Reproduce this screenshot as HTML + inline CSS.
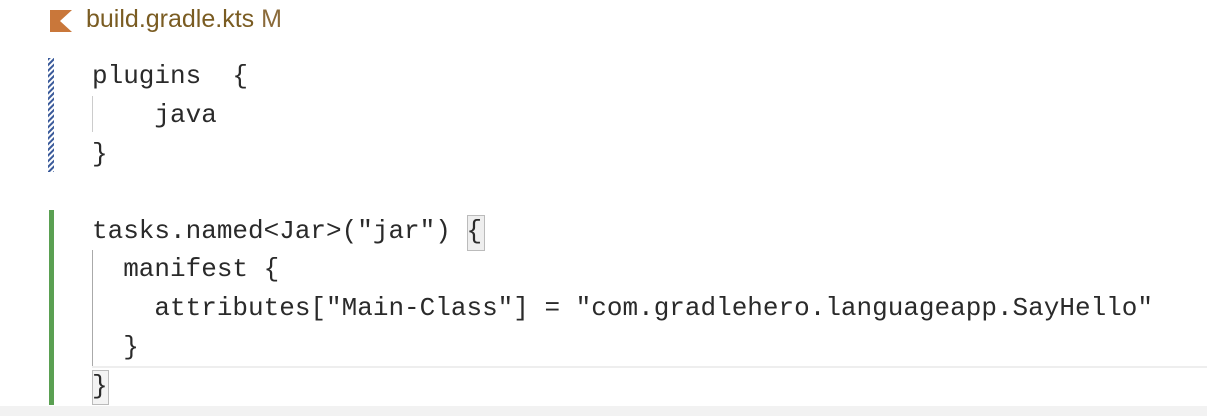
<!DOCTYPE html>
<html><head><style>
body{margin:0;width:1207px;height:416px;background:#fff;position:relative;overflow:hidden;font-family:"Liberation Mono",monospace;}
.t{position:absolute;left:86px;top:5px;font-family:"Liberation Sans",sans-serif;font-size:25px;color:#7a5c22;}
.l{position:absolute;left:92px;font-size:26px;color:#2a2a2a;white-space:pre;line-height:39px;height:39px;}
</style></head><body>
<svg style="position:absolute;left:50px;top:10px" width="22" height="22"><polygon points="0,0 22,0 10,11 22,22 0,22" fill="#c9773a"/></svg>
<div class="t">build.gradle.kts <span style="color:#8a6a3a">M</span></div>
<svg style="position:absolute;left:48px;top:58px" width="6" height="114"><defs><pattern id="h" width="4" height="4" patternUnits="userSpaceOnUse" patternTransform="rotate(45)"><rect width="2" height="4" fill="#3a5a9a"/></pattern></defs><rect width="6" height="114" fill="url(#h)"/></svg>
<div style="position:absolute;left:49px;top:210px;width:5px;height:195px;background:#5aa052"></div>
<div style="position:absolute;left:92px;top:96px;width:1px;height:36px;background:#ccc"></div>
<div style="position:absolute;left:92px;top:250px;width:1px;height:117px;background:#aaa"></div>
<div style="position:absolute;left:92px;top:366px;right:0;height:38px;border-top:2px solid #eee;border-bottom:2px solid #eee;"></div>
<div style="position:absolute;left:0;top:406px;right:0;bottom:0;background:#f2f2f2"></div>
<div style="position:absolute;left:467px;top:215px;width:16px;height:34px;background:#eee;border:1px solid #bbb"></div>
<div style="position:absolute;left:92px;top:370px;width:15px;height:33px;border:1px solid #bbb;background:#f3f3f3"></div>
<div class="l" style="top:57px">plugins  {</div>
<div class="l" style="top:96px">    java</div>
<div class="l" style="top:135px">}</div>
<div class="l" style="top:212px">tasks.named&lt;Jar&gt;("jar") {</div>
<div class="l" style="top:250px">  manifest {</div>
<div class="l" style="top:289px">    attributes["Main-Class"] = "com.gradlehero.languageapp.SayHello"</div>
<div class="l" style="top:328px">  }</div>
<div class="l" style="top:367px">}</div>
</body></html>
